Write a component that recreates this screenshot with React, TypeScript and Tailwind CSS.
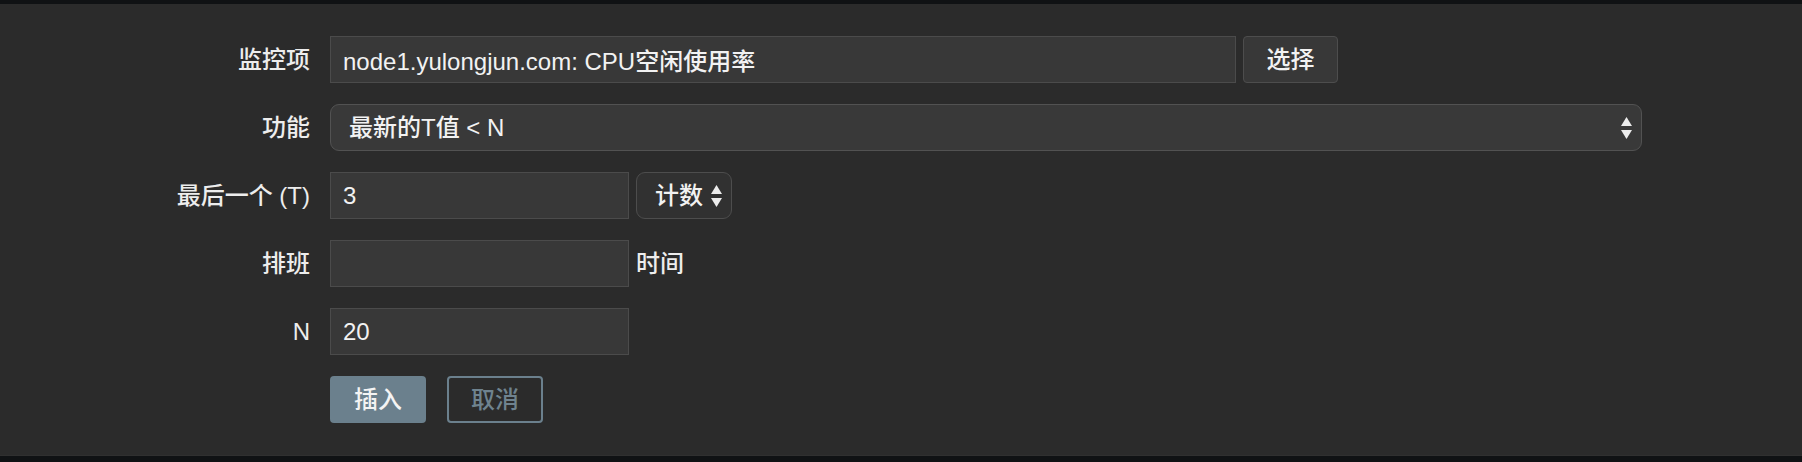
const font = { fontFamily: '"Liberation Sans", "Noto Sans CJK SC", sans-serif' };

function Arrows() {
  return (
    <svg width="11" height="22" viewBox="0 0 11 22" className="shrink-0">
      <polygon points="5.5,0 11,9 0,9" fill="#ececec" />
      <polygon points="0,13 11,13 5.5,22" fill="#ececec" />
    </svg>
  );
}

function TextBox({ value, width }: { value: string; width: string }) {
  return (
    <input
      readOnly
      value={value}
      className={`${width} h-[47px] bg-[#383838] border border-[#4b4b4b] px-[12px] text-[24px] font-medium text-[#f2f2f2] outline-none`}
    />
  );
}

function Label({ children }: { children: React.ReactNode }) {
  return <div className="text-right text-[24px] font-medium text-[#ededed] leading-none">{children}</div>;
}

export default function App() {
  return (
    <div className="w-screen h-[462px] bg-[#101214] pt-[4px]" style={font}>
      <div className="h-[452px] bg-[#2b2b2b] border-b border-[#303030] pt-[32px]">
        <div className="grid grid-cols-[310px_1fr] gap-x-[20px] gap-y-[21px] items-center">
          <Label>监控项</Label>
          <div className="flex items-center gap-[7px]">
            <TextBox value="node1.yulongjun.com: CPU空闲使用率" width="w-[906px]" />
            <button className="w-[95px] h-[47px] rounded-[4px] bg-[#383838] border border-[#4d4d4d] text-[24px] font-medium text-[#f2f2f2]">
              选择
            </button>
          </div>

          <Label>功能</Label>
          <div className="w-[1312px] h-[47px] rounded-[9px] bg-[#393939] border border-[#525252] flex items-center justify-between pl-[18px] pr-[9px] text-[24px] font-medium text-[#f2f2f2]">
            <span>最新的T值 &lt; N</span>
            <Arrows />
          </div>

          <Label>最后一个 (T)</Label>
          <div className="flex items-center gap-[7px]">
            <TextBox value="3" width="w-[299px]" />
            <div className="w-[96px] h-[47px] rounded-[9px] bg-[#313131] border border-[#4d4d4d] flex items-center justify-between pl-[18px] pr-[9px] text-[24px] font-medium text-[#f2f2f2]">
              <span>计数</span>
              <Arrows />
            </div>
          </div>

          <Label>排班</Label>
          <div className="flex items-center gap-[7px]">
            <TextBox value="" width="w-[299px]" />
            <span className="text-[24px] font-medium text-[#ededed]">时间</span>
          </div>

          <Label>N</Label>
          <div className="flex items-center">
            <TextBox value="20" width="w-[299px]" />
          </div>

          <div />
          <div className="flex items-center gap-[21px]">
            <button className="w-[96px] h-[47px] rounded-[4px] bg-[#6b808d] text-[24px] font-medium text-[#f4f4f4]">插入</button>
            <button className="w-[96px] h-[47px] rounded-[4px] border-2 border-[#6b808d] text-[24px] font-medium text-[#6f838f]">
              取消
            </button>
          </div>
        </div>
      </div>
    </div>
  );
}
